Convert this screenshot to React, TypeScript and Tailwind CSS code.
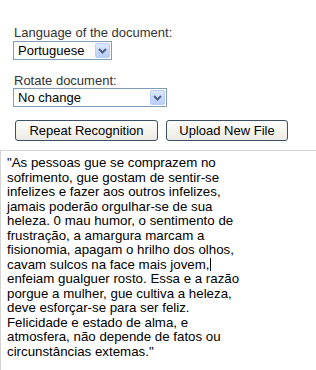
const lines = [
  '"As pessoas gue se comprazem no',
  "sofrimento, gue gostam de sentir-se",
  "infelizes e fazer aos outros infelizes,",
  "jamais poderão orgulhar-se de sua",
  "heleza. 0 mau humor, o sentimento de",
  "frustração, a amargura marcam a",
  "fisionomia, apagam o hrilho dos olhos,",
  "cavam sulcos na face mais jovem,",
  "enfeiam gualguer rosto. Essa e a razão",
  "porgue a mulher, gue cultiva a heleza,",
  "deve esforçar-se para ser feliz.",
  "Felicidade e estado de alma, e",
  "atmosfera, não depende de fatos ou",
  'circunstâncias extemas."',
];

const Chevron = () => (
  <svg width="9" height="6" viewBox="0 0 9 6">
    <path d="M1 1 L4.5 4.5 L8 1" fill="none" stroke="#4d6185" strokeWidth="2" />
  </svg>
);

const FakeSelect = ({ value, width }: { value: string; width: string }) => (
  <div className={`${width} h-[19px] flex items-stretch border border-[#7f9db9] bg-white`}>
    <span className="flex-1 pl-[4px] text-[13px] leading-[17px] text-black">{value}</span>
    <span className="w-[15px] m-px flex items-center justify-center rounded-[2px] border border-[#b9cdf7] bg-gradient-to-b from-[#dde8fe] to-[#b9cdf8]">
      <Chevron />
    </span>
  </div>
);

const XpButton = ({ label, width }: { label: string; width: string }) => (
  <button
    className={`${width} h-[21px] rounded-[3px] border border-[#3d4f63] bg-gradient-to-b from-[#fdfdfb] to-[#ecebe4] text-[13px] leading-[19px] text-black`}
  >
    {label}
  </button>
);

export default function App() {
  return (
    <div className="w-[316px] h-[370px] overflow-hidden bg-white font-['Liberation_Sans',Arial,sans-serif]">
      <div className="pl-[13px] pt-[25px]">
        <div className="text-[13px] leading-[15px] text-[#333] pl-px">Language of the document:</div>
        <div className="mt-px">
          <FakeSelect value="Portuguese" width="w-[99px]" />
        </div>
        <div className="mt-[13px] text-[13px] leading-[15px] text-[#333] pl-px">Rotate document:</div>
        <FakeSelect value="No change" width="w-[154px]" />
        <div className="mt-[13px] pl-[2px] flex gap-[8px]">
          <XpButton label="Repeat Recognition" width="w-[143px]" />
          <XpButton label="Upload New File" width="w-[122px]" />
        </div>
      </div>
      <div className="mt-[9px] h-[240px] w-[330px] border border-[#d4d4d4] pl-[6px] pt-[5px] text-[13.3px] leading-[14.5px] text-black whitespace-pre">
        {lines.map((l, i) => (
          <div key={i}>
            {l}
            {i === 7 && <span className="inline-block w-px h-[13px] bg-black align-[-2px]" />}
          </div>
        ))}
      </div>
    </div>
  );
}
